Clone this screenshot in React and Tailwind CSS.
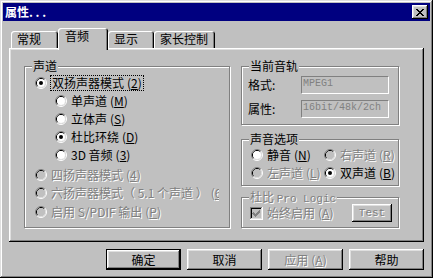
import React from "react";

const cjk = "font-['Noto_Sans_CJK_SC',sans-serif]";
const raised =
  "shadow-[inset_-1px_-1px_0_#000,inset_1px_1px_0_#fff,inset_-2px_-2px_0_#808080,inset_2px_2px_0_#dfdfdf]";
const grayed = "text-[#808080] [text-shadow:1px_1px_0_#fff]";

// classic 12px option button
const Radio = ({ checked, disabled }) => (
  <svg width="12" height="12" viewBox="0 0 12 12" className="shrink-0">
    <path d="M2.11 9.89A5.5 5.5 0 0 1 9.89 2.11" fill="none" stroke="#808080" />
    <path d="M9.89 2.11A5.5 5.5 0 0 1 2.11 9.89" fill="none" stroke="#fff" />
    <path d="M2.82 9.18A4.5 4.5 0 0 1 9.18 2.82" fill="none" stroke="#000" />
    <path d="M9.18 2.82A4.5 4.5 0 0 1 2.82 9.18" fill="none" stroke="#dfdfdf" />
    <circle cx="6" cy="6" r="4" fill={disabled ? "#c0c0c0" : "#fff"} />
    {checked && <circle cx="6" cy="6" r="2" fill={disabled ? "#808080" : "#000"} />}
  </svg>
);

const Check = () => (
  <svg width="13" height="13" viewBox="0 0 13 13" className="shrink-0" shapeRendering="crispEdges">
    <rect x="0" y="0" width="13" height="13" fill="#fff" />
    <rect x="0" y="0" width="12" height="12" fill="#808080" />
    <rect x="1" y="1" width="11" height="11" fill="#dfdfdf" />
    <rect x="1" y="1" width="10" height="10" fill="#000" />
    <rect x="2" y="2" width="9" height="9" fill="#c0c0c0" />
    <path d="M3 5h1v1h1v1h1v-1h1v-1h1v-1h1v-1h1v3h-1v1h-1v1h-1v1h-1v1h-1v-1h-1v-1h-1v-1h-1z" fill="#808080" />
  </svg>
);

const CloseGlyph = () => {
  const rows = ["11000011", "01100110", "00111100", "00011000", "00111100", "01100110", "11000011"];
  return (
    <svg width="8" height="7" viewBox="0 0 8 7" shapeRendering="crispEdges">
      {rows.map((r, y) =>
        r.split("").map((c, x) => (c === "1" ? <rect key={`${x}-${y}`} x={x} y={y} width="1" height="1" fill="#000" /> : null))
      )}
    </svg>
  );
};

const Key = ({ k }) => (
  <span className="ml-[3px]">
    (<u>{k}</u>)
  </span>
);

const Group = ({ title, dim, className, children }) => (
  <div className={`relative border border-[#808080] shadow-[inset_1px_1px_0_#fff,1px_1px_0_#fff] ${className}`}>
    <span className={`absolute -top-[8px] left-[7px] bg-[#c0c0c0] px-[1px] whitespace-nowrap ${dim ? grayed : ""}`}>
      {title}
    </span>
    {children}
  </div>
);

const Option = ({ checked, disabled, children, className = "" }) => (
  <div className={`flex items-center h-[18px] whitespace-nowrap ${className}`}>
    <Radio checked={checked} disabled={disabled} />
    <span className={`ml-[4px] ${disabled ? grayed : ""}`}>{children}</span>
  </div>
);

const Tab = ({ label, w, active }) => (
  <div
    className={`${w} ${
      active ? "h-[22px] -mb-[2px] z-10 relative pl-[7px]" : "h-[17px] pl-[6px]"
    } bg-[#c0c0c0] rounded-t-[3px] pt-[1px] shadow-[inset_1px_1px_0_#fff,inset_-1px_0_0_#000,inset_-2px_0_0_#808080]`}
  >
    {label}
  </div>
);

const Field = ({ children }) => (
  <div className="w-[88px] h-[18px] border-t border-l border-[#808080] border-b-white border-r-white border-b border-r pl-[1px] pt-[1px] font-['Liberation_Mono',monospace] text-[10px] leading-[12px] text-[#808080]">
    {children}
  </div>
);

const Btn = ({ children, primary, disabled }) => (
  <button
    className={`w-[75px] h-[21px] bg-[#c0c0c0] flex items-center justify-center ${raised} ${
      primary ? "border border-black" : ""
    } ${disabled ? grayed : ""}`}
  >
    {children}
  </button>
);

export default function App() {
  return (
    <div
      className={`w-[433px] h-[278px] bg-[#c0c0c0] p-[3px] flex flex-col overflow-hidden shadow-[inset_-1px_-1px_0_#000,inset_1px_1px_0_#dfdfdf,inset_-2px_-2px_0_#808080,inset_2px_2px_0_#fff] ${cjk} text-[12px] leading-[14px] text-black`}
    >
      {/* title bar */}
      <div className="h-[18px] shrink-0 bg-[#000080] flex items-center justify-between pl-[2px] pr-[2px]">
        <span className="text-white font-bold">属性. . .</span>
        <div className={`w-[16px] h-[14px] bg-[#c0c0c0] flex items-center justify-center ${raised}`}>
          <CloseGlyph />
        </div>
      </div>

      {/* tabs + page */}
      <div className="mt-[7px] px-[6px] flex flex-col">
        <div className="h-[20px] flex items-end pl-[2px]">
          <Tab label="常规" w="w-[47px]" />
          <Tab label="音频" w="w-[50px]" active />
          <Tab label="显示" w="w-[46px]" />
          <Tab label="家长控制" w="w-[61px]" />
        </div>

        <div className={`h-[194px] bg-[#c0c0c0] ${raised} pl-[15px] pt-[18px] flex`}>
          {/* 声道 */}
          <Group title="声道" className="w-[206px] h-[162px] pt-[7px] pl-[10px]">
            <div className="flex items-center h-[18px]">
              <Radio checked />
              <span className="ml-[3px] border border-dotted border-black px-[1px] leading-[14px]">
                双扬声器模式<Key k="2" />
              </span>
            </div>
            <Option className="ml-[20px]">
              单声道<Key k="M" />
            </Option>
            <Option className="ml-[20px]">
              立体声<Key k="S" />
            </Option>
            <Option checked className="ml-[20px]">
              杜比环绕<Key k="D" />
            </Option>
            <Option className="ml-[20px]">
              3D 音频<Key k="3" />
            </Option>
            <Option disabled className="mt-[2px]">
              四扬声器模式<Key k="4" />
            </Option>
            <Option disabled className="w-[184px] overflow-hidden">
              六扬声器模式（ 5.1 个声道 ）<Key k="6" />
            </Option>
            <Option disabled className="mt-[1px]">
              启用 S/PDIF 输出<Key k="P" />
            </Option>
          </Group>

          <div className="ml-[11px] w-[158px] flex flex-col">
            <Group title="当前音轨" className="h-[59px] pt-[9px] pl-[6px] flex flex-col gap-[6px]">
              <div className="flex items-center h-[18px]">
                <span className="w-[53px]">格式:</span>
                <Field>MPEG1</Field>
              </div>
              <div className="flex items-center h-[18px]">
                <span className="w-[53px]">属性:</span>
                <Field>16bit/48k/2ch</Field>
              </div>
            </Group>

            <Group title="声音选项" className="mt-[14px] h-[47px] pt-[6px] pl-[9px] grid grid-cols-[73px_auto] content-start">
              <Option>
                静音<Key k="N" />
              </Option>
              <Option disabled>
                右声道<Key k="R" />
              </Option>
              <Option disabled>
                左声道<Key k="L" />
              </Option>
              <Option checked>
                双声道<Key k="B" />
              </Option>
            </Group>

            <Group
              title={
                <>
                  杜比 <span className="font-['Liberation_Mono',monospace] text-[11px]">Pro Logic</span>
                </>
              }
              dim
              className="mt-[11px] h-[31px] pt-[6px] pl-[8px] pr-[6px] flex items-start"
            >
              <div className="flex items-center h-[18px]">
                <Check />
                <span className={`ml-[4px] ${grayed}`}>
                  始终启用<Key k="A" />
                </span>
              </div>
              <div
                className={`ml-auto w-[40px] h-[18px] flex items-center justify-center ${raised} ${grayed} font-['Liberation_Mono',monospace] text-[11px]`}
              >
                Test
              </div>
            </Group>
          </div>
        </div>
      </div>

      {/* dialog buttons */}
      <div className="mt-[7px] px-[6px] flex justify-end gap-[6px]">
        <Btn primary>确定</Btn>
        <Btn>取消</Btn>
        <Btn disabled>
          应用<Key k="A" />
        </Btn>
        <Btn>帮助</Btn>
      </div>
    </div>
  );
}
